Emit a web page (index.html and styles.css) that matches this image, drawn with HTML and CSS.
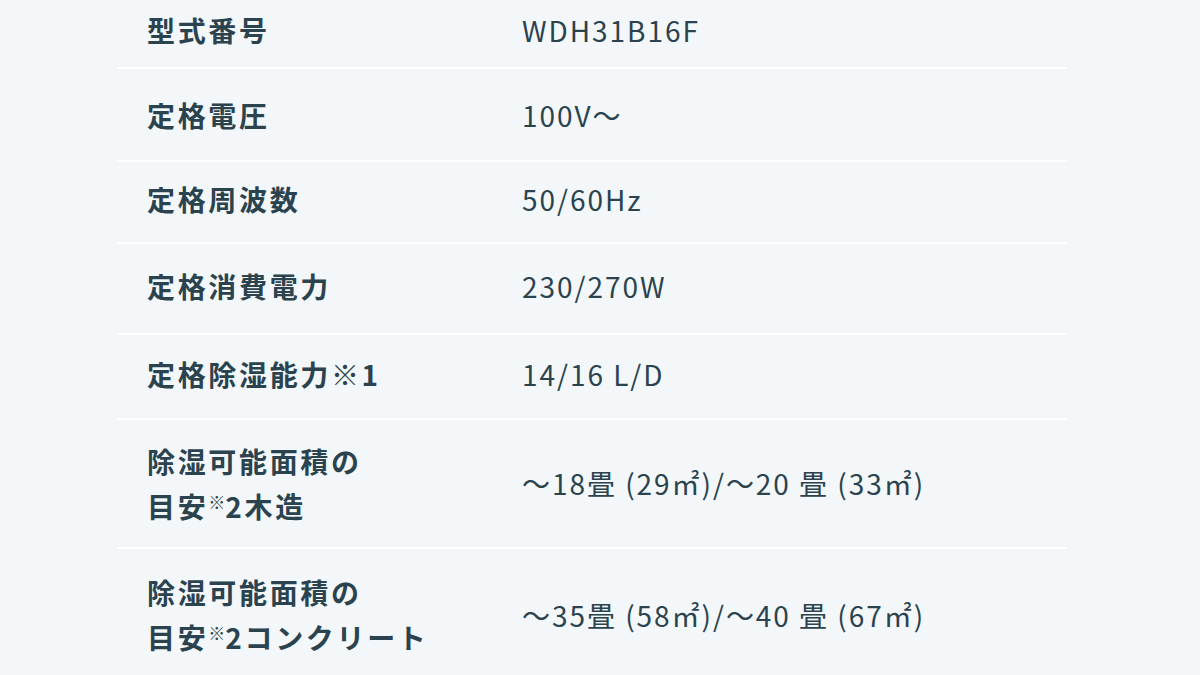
FILE: index.html
```html
<!DOCTYPE html>
<html lang="ja">
<head>
<meta charset="utf-8">
<link rel="stylesheet" href="styles.css">
</head>
<body>
<div class="spec">
  <div class="row r1"><div class="label">型式番号</div><div class="value">WDH31B16F</div></div>
  <div class="row r2"><div class="label">定格電圧</div><div class="value">100V～</div></div>
  <div class="row r3"><div class="label">定格周波数</div><div class="value">50/60Hz</div></div>
  <div class="row r4"><div class="label">定格消費電力</div><div class="value">230/270W</div></div>
  <div class="row r5"><div class="label">定格除湿能力※1</div><div class="value">14/16 L/D</div></div>
  <div class="row r6"><div class="label">除湿可能面積の<br>目安<span class="note">※</span>2木造</div><div class="value">～18畳 (29㎡)/～20 畳 (33㎡)</div></div>
  <div class="row r7"><div class="label">除湿可能面積の<br>目安<span class="note">※</span>2コンクリート</div><div class="value">～35畳 (58㎡)/～40 畳 (67㎡)</div></div>
</div>
</body>
</html>
```
FILE: styles.css
```css
html, body {
  margin: 0;
  padding: 0;
  background: #f3f7f9;
}
body {
  width: 1200px;
  height: 675px;
  overflow: hidden;
  font-family: "Noto Sans CJK JP", "Noto Sans", sans-serif;
  color: #2b434e;
}
.spec {
  margin-left: 117px;
  width: 950px;
}
.row {
  display: flex;
  align-items: center;
  border-bottom: 2px solid #ffffff;
  box-sizing: border-box;
}
.label {
  width: 405px;
  padding-left: 30px;
  box-sizing: border-box;
  font-weight: 700;
  font-size: 28px;
  letter-spacing: 0.095em;
  line-height: 45px;
}
.value {
  font-size: 28px;
  letter-spacing: 0.07em;
  line-height: 45px;
  font-weight: 400;
}
.note {
  font-size: 17px;
  vertical-align: 9px;
  line-height: 0;
  letter-spacing: 0;
  font-weight: 400;
}
.r1 { height: 69px; padding-bottom: 6px; }
.r2 { height: 93px; padding-top: 2px; }
.r3 { height: 82px; padding-bottom: 6px; }
.r4 { height: 91px; padding-bottom: 4px; }
.r5 { height: 85px; padding-bottom: 4px; }
.r6 { height: 129px; }
.r7 { height: 134px; }
```
